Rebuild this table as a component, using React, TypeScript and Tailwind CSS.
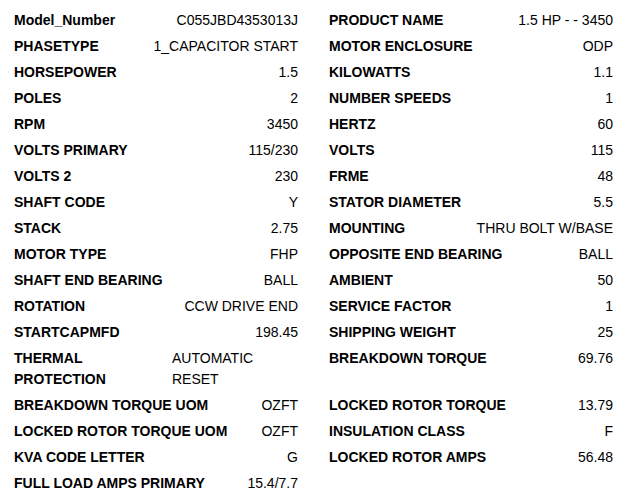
type Spec = { label: string; value: string }

const leftSpecs: Spec[] = [
  { label: "Model_Number", value: "C055JBD4353013J" },
  { label: "PHASETYPE", value: "1_CAPACITOR START" },
  { label: "HORSEPOWER", value: "1.5" },
  { label: "POLES", value: "2" },
  { label: "RPM", value: "3450" },
  { label: "VOLTS PRIMARY", value: "115/230" },
  { label: "VOLTS 2", value: "230" },
  { label: "SHAFT CODE", value: "Y" },
  { label: "STACK", value: "2.75" },
  { label: "MOTOR TYPE", value: "FHP" },
  { label: "SHAFT END BEARING", value: "BALL" },
  { label: "ROTATION", value: "CCW DRIVE END" },
  { label: "STARTCAPMFD", value: "198.45" },
  { label: "THERMAL PROTECTION", value: "AUTOMATIC RESET" },
  { label: "BREAKDOWN TORQUE UOM", value: "OZFT" },
  { label: "LOCKED ROTOR TORQUE UOM", value: "OZFT" },
  { label: "KVA CODE LETTER", value: "G" },
  { label: "FULL LOAD AMPS PRIMARY", value: "15.4/7.7" },
]

const rightSpecs: Spec[] = [
  { label: "PRODUCT NAME", value: "1.5 HP - - 3450" },
  { label: "MOTOR ENCLOSURE", value: "ODP" },
  { label: "KILOWATTS", value: "1.1" },
  { label: "NUMBER SPEEDS", value: "1" },
  { label: "HERTZ", value: "60" },
  { label: "VOLTS", value: "115" },
  { label: "FRME", value: "48" },
  { label: "STATOR DIAMETER", value: "5.5" },
  { label: "MOUNTING", value: "THRU BOLT W/BASE" },
  { label: "OPPOSITE END BEARING", value: "BALL" },
  { label: "AMBIENT", value: "50" },
  { label: "SERVICE FACTOR", value: "1" },
  { label: "SHIPPING WEIGHT", value: "25" },
  { label: "BREAKDOWN TORQUE", value: "69.76" },
  { label: "LOCKED ROTOR TORQUE", value: "13.79" },
  { label: "INSULATION CLASS", value: "F" },
  { label: "LOCKED ROTOR AMPS", value: "56.48" },
]

function SpecCell({ spec }: { spec?: Spec }) {
  if (!spec) return <div />

  // the long thermal row wraps into two lines in the original
  if (spec.label === "THERMAL PROTECTION") {
    return (
      <div className="flex items-start">
        <span className="w-[158px] shrink-0 pr-10 font-bold">{spec.label}</span>
        <span className="flex-1 pr-12">{spec.value}</span>
      </div>
    )
  }

  return (
    <div className="flex items-start justify-between gap-4">
      <span className="whitespace-nowrap font-bold">{spec.label}</span>
      <span className="whitespace-nowrap">{spec.value}</span>
    </div>
  )
}

export default function App() {
  const rows = leftSpecs.map((spec, i) => ({ left: spec, right: rightSpecs[i] }))

  return (
    <div className="h-[504px] w-[633px] bg-white pl-[14px] pt-[10px] font-['Liberation_Sans',Arial,sans-serif] text-[14px] leading-[21px] text-black">
      <div className="grid w-[599px] grid-cols-[284px_284px] gap-x-[31px] gap-y-[5px]">
        {rows.map((row) => (
          <div key={row.left.label} className="contents">
            <SpecCell spec={row.left} />
            <SpecCell spec={row.right} />
          </div>
        ))}
      </div>
    </div>
  )
}
